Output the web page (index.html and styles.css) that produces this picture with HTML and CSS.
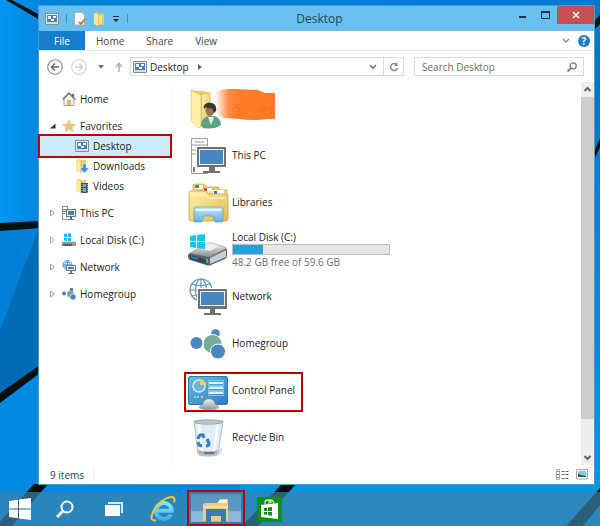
FILE: index.html
```html
<!DOCTYPE html>
<html lang="en">
<head>
<meta charset="utf-8">
<title>Desktop</title>
<link rel="stylesheet" href="styles.css">
</head>
<body>
<svg class="wallpaper" viewBox="0 0 600 526" preserveAspectRatio="none" aria-hidden="true">
  <defs>
    <linearGradient id="wall" x1="0" x2="1"><stop offset="0" stop-color="#0096f0"/><stop offset=".07" stop-color="#0085df"/><stop offset=".9" stop-color="#0079d0"/><stop offset="1" stop-color="#0078cf"/></linearGradient>
    <linearGradient id="wallLow" x1="0" x2="0" y1="0" y2="1"><stop offset="0" stop-color="#0080d8"/><stop offset="1" stop-color="#0296e8"/></linearGradient>
  </defs>
  <rect width="600" height="526" fill="url(#wall)"/>
  <path d="M0 226L40 224V372L0 398Z" fill="#0080d8"/>
  <path d="M38 230L0 330V398L40 372V230Z" fill="#006cb6"/>
  <path d="M0 404L40 376V486H600V526H0Z" fill="#0089e3"/>
  <path d="M594 150V486H600V150Z" fill="url(#wallLow)"/>
  <path d="M240 484H600V526H240Z" fill="#0095e0"/>
  <path d="M0 223L40 221V228L0 231ZM0 393L40 365V373L0 403ZM6 0H12L40 15V20ZM34 484H48L12 526H-4ZM282 484H296L258 526H242ZM594 21L600 15V24L594 30ZM594 152L600 138V147L594 160ZM600 488V505L583 526H566Z" fill="#06100f"/>
</svg>

<svg class="symbols" aria-hidden="true">
  <defs>
    <linearGradient id="gold" x1="0" x2="1" y1="0" y2="1"><stop offset="0" stop-color="#fdf3b0"/><stop offset="1" stop-color="#e3b94e"/></linearGradient>
    <linearGradient id="metal" x1="0" x2="0" y1="0" y2="1"><stop offset="0" stop-color="#f4f4f4"/><stop offset="1" stop-color="#8d9092"/></linearGradient>
    <linearGradient id="panel" x1="0" x2="1" y1="0" y2="1"><stop offset="0" stop-color="#68b9e8"/><stop offset="1" stop-color="#2b7fc4"/></linearGradient>
    <linearGradient id="clip" x1="0" x2="0" y1="0" y2="1"><stop offset="0" stop-color="#c5e6f6"/><stop offset="1" stop-color="#5fb0dd"/></linearGradient>
    <linearGradient id="ie" gradientUnits="userSpaceOnUse" x1="0" x2="0" y1="4" y2="25"><stop offset="0" stop-color="#9be8fd"/><stop offset="1" stop-color="#35aee8"/></linearGradient>
    <linearGradient id="smear" x1="0" x2="1"><stop offset="0" stop-color="#ff7b2a" stop-opacity="0"/><stop offset=".22" stop-color="#ff7b2a" stop-opacity=".85"/><stop offset=".4" stop-color="#ff7b2a"/><stop offset="1" stop-color="#ff7a22"/></linearGradient>
  </defs>
  <symbol id="i-desk" viewBox="0 0 14 12"><path d="M.5.5h13v11H.5z" fill="#eee" stroke="#8a8a8a"/><path d="M2 2h10v7H2z" fill="#4480bd"/><path d="M3 3h3v3H3zM8 3h3v2H8zM6 6h3v2H6z" fill="#fff"/><path d="M2 10h10" stroke="#c4c4c4"/></symbol>
  <symbol id="i-pc" viewBox="0 0 14 14"><path d="M5 13.500H.5V.5h5v3M1 3.500h3M1 5.500h3M1 7.500h2" fill="none" stroke="#888"/><path d="M4 3h10v8H4z" fill="#707274"/><path d="M5 4h8v6H5z" fill="#e4eaf0"/><path d="M6 5h6v4H6z" fill="#4480bd"/><path d="M8 11h2v2H8zM6 13h6v1H6z" fill="#707274"/></symbol>
  <symbol id="i-disk" viewBox="0 0 14 14"><path d="M2 1l3-.5V4H2zM6 .4L9 0v4H6zM2 5h3v3l-3-.5zM6 5h3v3H6z" fill="#00bfee"/><path d="M0 9l2-1h10l2 1v4H0z" fill="#8f999e"/><path d="M1 8.500h12" stroke="#d9dcde"/><path d="M1 11h9v2H1z" fill="#4f5f68"/><path d="M10 11h2v1h-2z" fill="#3be04d"/></symbol>
  <symbol id="i-net" viewBox="0 0 14 14"><path d="M1 5a4.500 4.500 0 0 1 9 0M1 5a4.500 4.500 0 0 0 3 4M1 5h9M5.500 1v5M3 8V3.500a3 3 0 0 1 5 0V5" fill="none" stroke="#4c8dc4"/><path d="M4 5h10v6H4z" fill="#707274"/><path d="M5 6h8v4H5z" fill="#e4eaf0"/><path d="M6 7h6v2H6z" fill="#4480bd"/><path d="M8 11h2v2H8zM6 13h6v1H6z" fill="#707274"/></symbol>
  <symbol id="i-group" viewBox="0 0 14 14"><circle cx="2" cy="6.500" r="2" fill="#4480bd"/><circle cx="9.500" cy="2.500" r="1.800" fill="#4480bd"/><circle cx="8.500" cy="7" r="3.500" fill="#76ad97"/><circle cx="11" cy="10" r="3" fill="#4480bd" stroke="#fff" stroke-width=".6"/></symbol>
  <symbol id="i-folder" viewBox="0 0 14 14"><path d="M1 1l4-1 1 1h5v12H5l-4-1z" fill="#f0cf70"/><path d="M1 1l5 1v12l-5-2z" fill="#fbe9a0"/><path d="M6 2v12" stroke="#d5a840" stroke-width=".6"/></symbol>
</svg>

<div class="screen">
  <main class="desktop">
    <section class="window" aria-label="Desktop folder">
      <header class="titlebar">
        <div class="quick">
          <svg class="ic-desk" width="14" height="12"><use href="#i-desk"/></svg>
          <i class="sep"></i>
          <button class="plain" aria-label="Properties"><svg width="12" height="14" viewBox="0 0 12 14"><path d="M.5.5H8L10.500 3v10H.5z" fill="#fafafa" stroke="#b3aeb0"/><path d="M8 0v3h3" fill="#ccc"/><path d="M5 10l2 2 4-5" fill="none" stroke="#bf8237" stroke-width="2"/></svg></button>
          <button class="plain" aria-label="New folder"><svg width="12" height="14" viewBox="0 0 12 14"><path d="M1 1l4-1 1 2 5-1v12H5l-4-1z" fill="#ecc75f"/><path d="M1 1l4 2v11l-4-2z" fill="#fbe9a0"/><path d="M6 4l3-1v8l-3 1z" fill="#f8e08a"/></svg></button>
          <button class="plain" aria-label="Customize toolbar"><svg width="8" height="8" viewBox="0 0 8 8"><path d="M1 1.500h6" stroke="#112838"/><path d="M1 4h6L4 7z" fill="#112838"/></svg></button>
          <i class="sep"></i>
        </div>
        <h1>Desktop</h1>
        <div class="controls">
          <button class="ctl" aria-label="Minimize"><svg width="9" height="8" viewBox="0 0 9 8"><path d="M1 5h7v2H1z" fill="#18384c"/></svg></button>
          <button class="ctl" aria-label="Maximize"><svg width="9" height="8" viewBox="0 0 9 8"><path d="M.5 1h8v6.500h-8z" fill="none" stroke="#18384c"/><path d="M0 0h9v2H0z" fill="#18384c"/></svg></button>
          <button class="ctl close" aria-label="Close"><svg width="8" height="8" viewBox="0 0 8 8"><path d="M1 1l6 6M7 1L1 7" stroke="#fff" stroke-width="1.500"/></svg></button>
        </div>
      </header>
      <nav class="ribbon">
        <button class="tab file">File</button><button class="tab">Home</button><button class="tab">Share</button><button class="tab">View</button>
        <div class="ribbon-end">
          <button class="plain" aria-label="Expand ribbon"><svg width="8" height="6" viewBox="0 0 8 6"><path d="M1 1l3 3 3-3" fill="none" stroke="#8b8b8b" stroke-width="1.500"/></svg></button>
          <button class="help" aria-label="Help">?</button>
        </div>
      </nav>
      <div class="navbar">
        <button class="plain" aria-label="Back"><svg width="16" height="16" viewBox="0 0 16 16"><circle cx="8" cy="8" r="7.300" fill="none" stroke="#888" stroke-width="1.100"/><path d="M12 8H5M8 4.500L4.500 8 8 11.500" fill="none" stroke="#6c6c6c" stroke-width="1.600"/></svg></button>
        <button class="plain" aria-label="Forward"><svg width="16" height="16" viewBox="0 0 16 16"><circle cx="8" cy="8" r="7.300" fill="none" stroke="#d2d2d2" stroke-width="1.100"/><path d="M4 8h7M8 4.500L11.500 8 8 11.500" fill="none" stroke="#d2d2d2" stroke-width="1.600"/></svg></button>
        <button class="plain recent" aria-label="Recent locations"><svg width="6" height="4" viewBox="0 0 6 4"><path d="M0 0h6L3 4z" fill="#777"/></svg></button>
        <button class="plain" aria-label="Up"><svg width="8" height="10" viewBox="0 0 8 10"><path d="M4 10V2M1 5l3-3.500L7 5" fill="none" stroke="#b0b0b0" stroke-width="1.500"/></svg></button>
        <div class="address">
          <svg class="ic-desk" width="14" height="12"><use href="#i-desk"/></svg>
          <a href="#desktop">Desktop</a>
          <svg width="4" height="6" viewBox="0 0 4 6"><path d="M0 0l4 3-4 3z" fill="#666"/></svg>
          <button class="plain history" aria-label="Previous locations"><svg width="8" height="6" viewBox="0 0 8 6"><path d="M1 1l3 3 3-3" fill="none" stroke="#777" stroke-width="1.600"/></svg></button>
          <button class="refresh" aria-label="Refresh"><svg width="10" height="10" viewBox="0 0 10 10"><path d="M7.500 2.500A3.500 3.500 0 1 0 8.500 6" fill="none" stroke="#888" stroke-width="1.500"/><path d="M8.500 0v4H5z" fill="#888"/></svg></button>
        </div>
        <label class="search">
          <input type="text" placeholder="Search Desktop" aria-label="Search Desktop">
          <svg width="10" height="10" viewBox="0 0 10 10"><circle cx="6.200" cy="3.800" r="3" fill="none" stroke="#777" stroke-width="1.300"/><path d="M4 6L.5 9.500" stroke="#777" stroke-width="1.700"/></svg>
        </label>
      </div>
      <div class="content">
        <nav class="side" aria-label="Folders">
          <div class="group">
            <a class="row" href="#home"><i class="arrow"></i><svg width="14" height="14" viewBox="0 0 14 14"><path d="M10 2h2v4h-2z" fill="#c63b34"/><path d="M2 7l5-5 5 5v6.500H2z" fill="#f7f5f1" stroke="#8b8b8b" stroke-width=".8"/><path d="M.5 7.500L7 1l6.500 6.500" fill="none" stroke="#777" stroke-width="1.300"/><path d="M5 8h4v5H5z" fill="#e8b45c"/></svg>Home</a>
          </div>
          <div class="group">
            <a class="row" href="#favorites"><i class="arrow"><svg width="6" height="6" viewBox="0 0 6 6"><path d="M5.500.5v5H0z" fill="#333"/></svg></i><svg width="14" height="14" viewBox="0 0 14 14"><path d="M7 1l1.700 4.300 4.800.3-3.700 3L11 13 7 10.500 3 13l1.200-4.400-3.700-3 4.800-.3z" fill="#e8c68b" stroke="#dfb46e" stroke-width=".6"/></svg>Favorites</a>
            <a class="row sub current" href="#desktop"><svg width="14" height="12"><use href="#i-desk"/></svg>Desktop</a>
            <a class="row sub" href="#downloads"><svg width="14" height="14" viewBox="0 0 14 14"><use href="#i-folder" width="14" height="14"/><path d="M8 5h3v4h3l-4.500 5L5 9h3z" fill="#2e95d6" stroke="#d9eefb" stroke-width=".4"/></svg>Downloads</a>
            <a class="row sub" href="#videos"><svg width="14" height="14" viewBox="0 0 14 14"><use href="#i-folder" width="14" height="14"/><path d="M6 4h7v10H6z" fill="#46525b"/><path d="M8 5h3v3H8zM8 9h3v4H8z" fill="#6fa7d1"/><path d="M7 5v9M12.500 5v9" stroke="#ccc" stroke-width=".7" stroke-dasharray="1 1"/></svg>Videos</a>
          </div>
          <div class="group"><a class="row" href="#pc"><i class="arrow"><svg width="5" height="8" viewBox="0 0 5 8"><path d="M.5 1v6L4.300 4z" fill="#fff" stroke="#999" stroke-width=".9"/></svg></i><svg width="14" height="14"><use href="#i-pc"/></svg>This PC</a></div>
          <div class="group"><a class="row" href="#disk"><i class="arrow"><svg width="5" height="8" viewBox="0 0 5 8"><path d="M.5 1v6L4.300 4z" fill="#fff" stroke="#999" stroke-width=".9"/></svg></i><svg width="14" height="14"><use href="#i-disk"/></svg>Local Disk (C:)</a></div>
          <div class="group"><a class="row" href="#network"><i class="arrow"><svg width="5" height="8" viewBox="0 0 5 8"><path d="M.5 1v6L4.300 4z" fill="#fff" stroke="#999" stroke-width=".9"/></svg></i><svg width="14" height="14"><use href="#i-net"/></svg>Network</a></div>
          <div class="group"><a class="row" href="#homegroup"><i class="arrow"><svg width="5" height="8" viewBox="0 0 5 8"><path d="M.5 1v6L4.300 4z" fill="#fff" stroke="#999" stroke-width=".9"/></svg></i><svg width="14" height="14"><use href="#i-group"/></svg>Homegroup</a></div>
        </nav>
        <div class="items">
          <a class="item" href="#user">
            <svg class="big" viewBox="0 0 40 40">
              <path d="M27 5C27 0 34-1 46-1L70 0 77 3H87V29H80Q65 31 52 29L36 28Q28 24 27 18Z" fill="url(#smear)"/>
              <path d="M3 0L22 2V32L12 36Z" fill="#e8c765"/><path d="M3 0L13 5V37L10 38 3 30Z" fill="#fdf1a8" stroke="#d6b654" stroke-width=".6"/><path d="M14 5L23 3V31L14 36Z" fill="url(#gold)"/>
              <path d="M13 36C13 29 17 27 21 26L27 26Q33 29 33 35Q26 40 15 38Z" fill="#5aa47d"/><path d="M20 27l3 8 3-8z" fill="#edf5ef"/>
              <ellipse cx="22" cy="20" rx="4.500" ry="6" fill="#9a7051"/><path d="M16 19C14 12 24 11 27 15Q30 20 26 23L24 18Q20 19 18 17Z" fill="#34332f"/>
            </svg>
            <span class="name hidden-name"><span>iS</span><span>are</span></span>
          </a>
          <a class="item" href="#pc">
            <svg class="big" viewBox="0 0 40 40">
              <path d="M3.500 1.500h16v35h-16z" fill="#fff" stroke="#9a9c9e"/><path d="M7 5h9M4 8h15M4 13h6M4 17h6" stroke="#9a9c9e"/><path d="M5 30h2v5H5z" fill="#77797c"/>
              <path d="M8 9h31v26H8z" fill="#fff"/><path d="M9 11q0-1 1-1h27q1 0 1 1v18q0 1-1 1H10q-1 0-1-1z" fill="#6f7174"/><path d="M11 12h25v16H11z" fill="#eef3f8"/><path d="M12 13h23v14H12z" fill="#4a86c1"/><path d="M21 30h6v4h5v2H15v-2h6z" fill="#6f7174"/>
            </svg>
            <span class="name">This PC</span>
          </a>
          <a class="item" href="#libraries">
            <svg class="big" viewBox="0 0 40 40">
              <path d="M5 2q0-2 2-2h9l3 3h12v8H5z" fill="#ecd07c" stroke="#c9a24b" stroke-width=".7"/><path d="M7 1h8v4H7z" fill="#fff"/><path d="M7 1h4v3H7z" fill="#47a05a"/>
              <path d="M14 5l2-1h8l2 2h13v8H14z" fill="#f2dc8f" stroke="#c9a24b" stroke-width=".7"/><path d="M16 4h8v3h-8z" fill="#fff"/><path d="M16 4h3v3h-3z" fill="#d8532d"/><path d="M25 6h11v4H25z" fill="#fff"/><path d="M26 7h3v3h-3z" fill="#2873c4"/>
              <path d="M1 9q0-2 2-2h14l4 3h17q2 0 2 2v23q0 2-2 2H3q-2 0-2-2z" fill="url(#gold)" stroke="#cba347" stroke-width=".8"/><path d="M4 11h13l4 3h16" stroke="#fff3c0" fill="none"/>
              <path d="M6 25q0-2 2-2h25q2 0 2 2v13h-8l-2-6H16l-2 6H6z" fill="url(#clip)" stroke="#5a9fc9" stroke-width=".7"/><path d="M8 26h25" stroke="#e7f6fc" stroke-width="2"/>
            </svg>
            <span class="name">Libraries</span>
          </a>
          <a class="item" href="#disk">
            <svg class="big" viewBox="0 0 40 40">
              <path d="M2 22L18 13q3-2 6-1l13 4q2 1 2 4v5q0 2-2 3L23 34q-2 1-5 0L2 29Q0 28 0 26v-2q0-1 2-2z" fill="#5b6368"/><path d="M2 22L18 13q3-2 6-1l13 4q1 1 0 2L23 25q-2 1-5 0z" fill="url(#metal)" stroke="#aaa" stroke-width=".5"/><path d="M19 14l4-1 8 2-9 5-9-2z" fill="#eee"/><path d="M22 27L38 19v7L22 33z" fill="#cbcdce"/><path d="M2 24l17 5v4L2 28z" fill="#27455b"/><path d="M3 25l7 2v2l-7-2z" fill="#347ba6"/><path d="M19 28v4" stroke="#2bd54a" stroke-width="2"/>
              <path d="M2 5l6-1v6H2zM9 4l8-1v7H9zM2 11h6v6l-6-1zM9 11h8v7l-8-1z" fill="#12c7f3"/>
            </svg>
            <span class="name drive">
              <span>Local Disk (C:)</span>
              <span class="bar" role="img" aria-label="Used space"><span class="fill" style="width:19%"></span></span>
              <span class="space">48.2 GB free of 59.6 GB</span>
            </span>
          </a>
          <a class="item" href="#network">
            <svg class="big" viewBox="0 0 40 40">
              <g fill="none" stroke="#5e98c9" stroke-width="1.200"><circle cx="13" cy="12" r="11"/><ellipse cx="13" cy="12" rx="5.500" ry="11"/><path d="M13 1v22M2 12h22M4 6q9 3 18 0M4 18q9-3 18 0"/></g>
              <path d="M9 10h31v27H13V24H9z" fill="#fff"/><path d="M10 12q0-1 1-1h27q1 0 1 1v18q0 1-1 1H11q-1 0-1-1z" fill="#6f7174"/><path d="M12 13h25v15H12z" fill="#eef3f8"/><path d="M13 14h23v13H13z" fill="#4a86c1"/><path d="M22 31h5v4h6v2H16v-2h6z" fill="#6f7174"/>
            </svg>
            <span class="name">Network</span>
          </a>
          <a class="item" href="#homegroup">
            <svg class="big" viewBox="0 0 40 40"><circle cx="8.500" cy="18" r="6" fill="#4a86c1"/><circle cx="27.500" cy="8.500" r="4.300" fill="#4a86c1"/><circle cx="24.500" cy="19" r="9.500" fill="#76ad97" stroke="#fff"/><circle cx="30" cy="26.500" r="7.500" fill="#4a86c1" stroke="#fff"/></svg>
            <span class="name">Homegroup</span>
          </a>
          <a class="item marked" href="#control-panel">
            <svg class="big" viewBox="0 0 40 40">
              <rect x=".5" y="4.500" width="39" height="28" rx="1.500" fill="url(#panel)" stroke="#3479ac"/><circle cx="11" cy="14" r="6" fill="#6ab5e2" stroke="#d5effa" stroke-width="1.500"/><path d="M12 13V7a6 6 0 0 1 6 6z" fill="#f2cc75"/>
              <path d="M21 10h14v2H21zM21 15h14v2H21zM21 20h14v2H21z" fill="#d9f1fc"/><path d="M20.500 8.500h15v5h-15zM20.500 14.500h15v4h-15zM20.500 19.500h15v4h-15z" fill="none" stroke="#93d0ef" stroke-width=".8"/><path d="M6 24h2v2H6zM9 24h2v2H9z" fill="#7ddcf2"/><path d="M13 24h2v2h-2z" fill="#f2b951"/>
              <path d="M11 36q1-3 4-4 1-5 6-5t6 5q3 1 4 4-4 2-10 2t-10-2z" fill="url(#metal)" stroke="#999" stroke-width=".5"/>
            </svg>
            <span class="name">Control Panel</span>
          </a>
          <a class="item" href="#recycle">
            <svg class="big" viewBox="0 0 40 40">
              <path d="M22 36L35 28 33 35Q28 38 22 37Z" fill="#ddd"/><path d="M6 2L10 35Q11 37 20 37T30 35L35 2Z" fill="#e2edf3" stroke="#b4bfc6"/><path d="M11 5l3 27M30 5l-4 27" stroke="#f8fcfe" stroke-width="2.500"/><path d="M10 31l1 4q9 3 18 0l1-4q-10 3-20 0z" fill="#a9aeb0"/><path d="M16 34h10" stroke="#6b7175" stroke-width="2"/><ellipse cx="20.500" cy="3" rx="14.500" ry="2.200" fill="#b9c6cd" stroke="#9ba9b1"/>
              <g fill="none" stroke="#2f7fc8" stroke-width="3"><path d="M10 20q1-5 5-4l1 3"/><path d="M19 20l2 4q0 3-3 3"/><path d="M14 27l-3-1-1-3"/></g>
            </svg>
            <span class="name">Recycle Bin</span>
          </a>
        </div>
        <div class="scroll" aria-hidden="true">
          <svg width="13" height="15" viewBox="0 0 13 15"><path d="M3.500 9L6.500 6l3 3" fill="none" stroke="#666" stroke-width="2"/></svg>
          <i class="thumb"></i>
          <svg width="13" height="15" viewBox="0 0 13 15"><path d="M3.500 6l3 3 3-3" fill="none" stroke="#666" stroke-width="2"/></svg>
        </div>
      </div>
      <footer class="status">
        <span class="count">9 items</span>
        <div class="views">
          <button class="plain" aria-label="Details"><svg width="13" height="11" viewBox="0 0 13 11"><path d="M.5.5h3v10h-3z" fill="#fff" stroke="#aaa"/><path d="M1 2h2v1H1zM1 8h2v1H1z" fill="#77a990"/><path d="M1 5h2v1H1z" fill="#d23f35"/><path d="M5.500 2.500h7M5.500 5.500h7M5.500 9.500h7" stroke="#666" stroke-dasharray="3 1"/></svg></button>
          <button class="plain" aria-label="Large icons"><svg width="12" height="11" viewBox="0 0 12 11"><path d="M.5.5h11v9.500H.5z" fill="#fff" stroke="#aaa"/><path d="M2 2h8v6H2z" fill="#88c7e8"/><path d="M2 5l3 1 5 1v1H2z" fill="#1f5a5c"/></svg></button>
        </div>
      </footer>
    </section>
  </main>
  <nav class="taskbar" aria-label="Taskbar">
    <button class="task start" aria-label="Start"><svg width="22" height="22" viewBox="0 0 22 22"><path d="M0 3l9-1.200V10.500H0zM10 1.600L22 0v10.500H10zM0 11.500h9v8.700L0 19zM10 11.500h12V22l-12-1.600z" fill="#fff"/></svg></button>
    <button class="task" aria-label="Search"><svg width="18" height="18" viewBox="0 0 18 18"><circle cx="11" cy="7" r="5.500" fill="none" stroke="#fff" stroke-width="2"/><path d="M7 11l-6 6" stroke="#f4e9e4" stroke-width="3"/></svg></button>
    <button class="task" aria-label="Task view"><svg width="18" height="14" viewBox="0 0 18 14"><path d="M3 0h15v11h-2V2H3z" fill="#dce7ee"/><path d="M0 3h15v11H0z" fill="#fff"/></svg></button>
    <button class="task" aria-label="Internet Explorer"><svg width="26" height="26" viewBox="0 0 26 26"><path d="M21 18.500A8 8 0 1 1 21.800 14.800H7" fill="none" stroke="url(#ie)" stroke-width="4"/><path d="M6 24.500Q-2 25 4 14 11 3 20 1.200q6-1 4 5.300" fill="none" stroke="#f4c62e" stroke-width="2"/></svg></button>
    <button class="task active" aria-label="File Explorer"><svg width="26" height="23" viewBox="0 0 26 23"><path d="M0 22V6q0-2 2-2h12l3-4h8v22z" fill="#efcc84"/><path d="M17 1h7v3h-9z" fill="#fff3de"/><path d="M0 8h25" stroke="#f7dda7" stroke-width="2"/><path d="M3 10h20v13h-5v-6H8v6H3z" fill="#3b79b6"/></svg></button>
    <button class="task" aria-label="Store"><svg width="25" height="25" viewBox="0 0 25 25"><path d="M0 0h25v25H0z" fill="#0a9214"/><path d="M4 8l17-2v16L4 20z" fill="#fff"/><path d="M8 8V5q0-2 3-2t3 3M12 7V4q1-2 4 0l1 3" fill="none" stroke="#cfeac9" stroke-width="1.300"/><path d="M7 11l3-.5V14H7zM11 10.400l4-.4v4h-4zM7 15h3v3l-3-.4zM11 15h4v3.800l-4-.6z" fill="#0a9214"/></svg></button>
  </nav>
</div>
</body>
</html>
```
FILE: styles.css
```css
* { box-sizing: border-box; }
body {
  margin: 0;
  font: 10px/14px "Open Sans", "Noto Sans", sans-serif;
  color: #1b1b1b;
  background: #0085df;
}
a { color: inherit; text-decoration: none; }
button { font: inherit; color: inherit; border: 0; padding: 0; background: none; }
svg { display: block; flex: none; }
.wallpaper { position: fixed; inset: 0; width: 100%; height: 100%; z-index: -1; }
.symbols { position: absolute; width: 0; height: 0; }
.screen { display: flex; flex-direction: column; min-height: 100vh; }
.desktop { flex: 1; display: flex; padding: 5px 5px 7px 38px; }
.window {
  flex: 1;
  min-width: 0;
  display: flex;
  flex-direction: column;
  background: #fff;
  border: 1px solid #4a9dcc;
}

.titlebar { display: flex; height: 25px; background: #69c0ee; }
.quick { flex: 1; display: flex; align-items: center; gap: 7px; padding-left: 6px; }
.sep { width: 1px; height: 9px; background: #4c8fb5; }
.titlebar h1 { margin: 0; font-size: 12px; font-weight: 400; line-height: 25px; color: #1d4761; }
.controls { flex: 1; display: flex; justify-content: flex-end; align-items: flex-start; }
.ctl { display: grid; place-items: center; width: 23px; height: 18px; }
.close { width: 37px; background: #c75050; }

.ribbon { display: flex; height: 20px; border-bottom: 1px solid #e2e4e5; }
.tab { padding: 0 11px; color: #444; }
.file { width: 46px; background: #177dce; color: #fff; }
.ribbon-end { margin-left: auto; display: flex; align-items: center; gap: 8px; padding-right: 4px; }
.help { width: 12px; height: 12px; border-radius: 50%; background: #177dce; color: #fff; font-weight: 700; line-height: 12px; }

.navbar { display: flex; align-items: center; gap: 8px; height: 31px; padding: 0 10px 0 8px; }
.recent { padding: 0 3px; }
.address { flex: 1; display: flex; align-items: center; gap: 3px; height: 19px; margin-left: -1px; padding-left: 2px; border: 1px solid #d9dbdc; }
.address a { padding-right: 6px; }
.history { margin-left: auto; padding-right: 3px; }
.refresh { display: grid; place-items: center; width: 20px; height: 17px; border-left: 1px solid #d9dbdc; }
.search { display: flex; align-items: center; width: 170px; height: 19px; margin-left: 2px; padding: 0 6px 0 7px; border: 1px solid #d9dbdc; }
.search input { flex: 1; min-width: 0; padding: 0; border: 0; outline: 0; font: inherit; background: none; }
.search input::placeholder { color: #6d6d6d; opacity: 1; }

.content { flex: 1; display: flex; }
.side { display: flex; flex-direction: column; gap: 7px; width: 133px; padding: 7px 1px; border-right: 1px solid #f0f1f2; }
.row { display: flex; align-items: center; gap: 4px; height: 20px; padding-left: 10px; }
.arrow { display: grid; place-items: center start; width: 8px; }
.sub { padding-left: 35px; }
.current { background: #cdecf7; outline: 2px solid #be0000; }
.items { flex: 1; display: flex; flex-direction: column; align-items: flex-start; gap: 7px; padding: 8px 12px 4px; }
.item { display: flex; align-items: center; gap: 4px; height: 40px; padding: 0 6px 0 2px; border: 2px solid transparent; }
.marked { border-color: #be0000; }
.big { width: 40px; height: 40px; overflow: visible; }
.name { padding-bottom: 4px; }
.hidden-name { display: flex; gap: 20px; z-index: 1; color: #f27026; }
.drive { display: flex; flex-direction: column; }
.bar { width: 158px; height: 11px; border: 1px solid #bcbcbc; background: #e6e6e6; }
.fill { display: block; height: 100%; background: #26a0da; }
.space { color: #6d6d6d; }
.scroll { display: flex; flex-direction: column; width: 13px; background: #eceff0; }
.thumb { flex: 1; margin-bottom: 31px; background: #cdcdcd; }

.status { display: flex; justify-content: space-between; align-items: center; height: 19px; padding: 0 6px 0 11px; color: #23415c; }
.count { padding-right: 9px; border-right: 1px solid #eceeef; }
.views { display: flex; gap: 7px; }

.taskbar { display: flex; height: 34px; background: rgba(60, 131, 173, 0.7); }
.task { display: grid; place-items: center; width: 49px; height: 34px; }
.start { width: 40px; }
.active { width: 58px; height: 36px; margin-top: -2px; padding-top: 4px; border: 2px solid #be0000; background: linear-gradient(#5b97c0 60%, #8db8d8 60%); box-shadow: inset 0 0 0 2px #2f7fae; }
```
